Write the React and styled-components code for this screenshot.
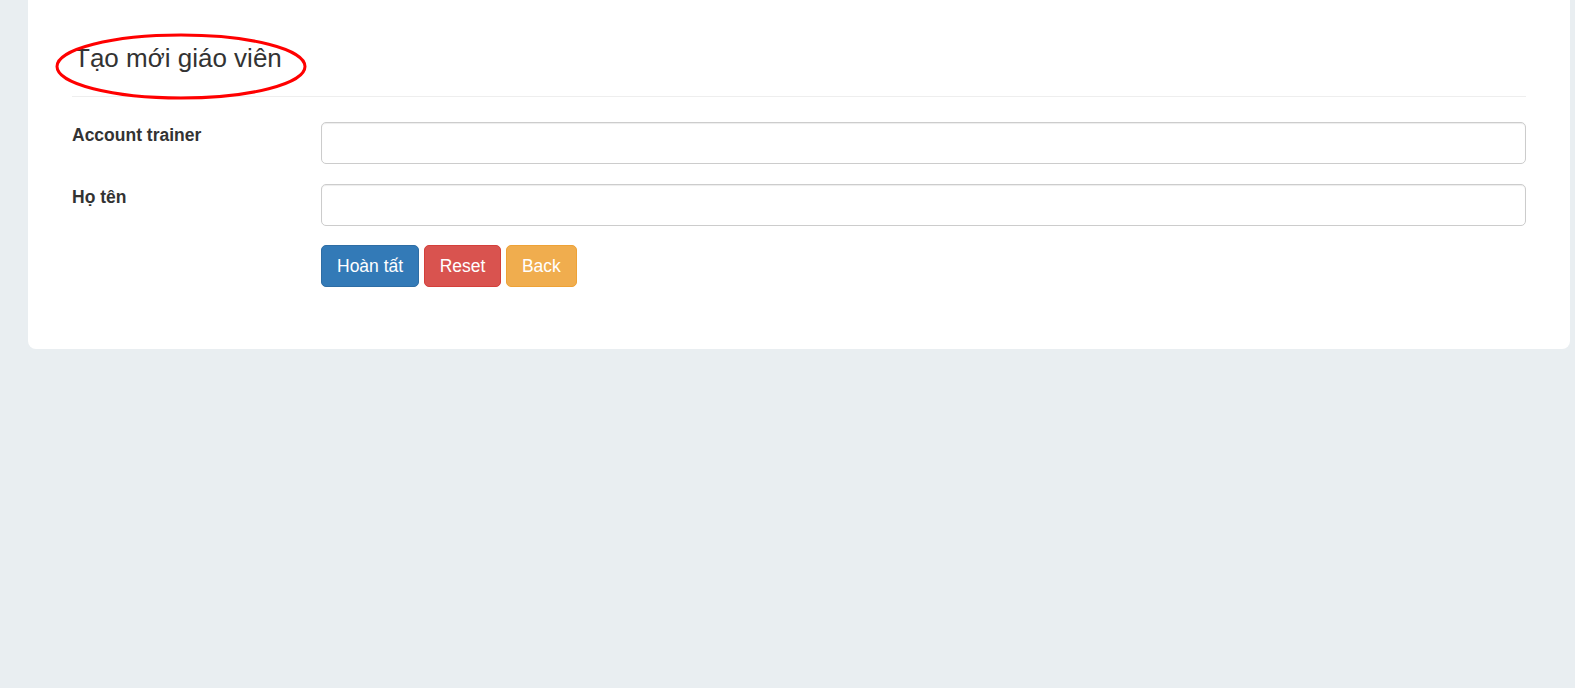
import styled, { createGlobalStyle } from "styled-components";

const GlobalStyle = createGlobalStyle`
  html, body {
    margin: 0;
    padding: 0;
    min-height: 100%;
    background-color: #e9eef1;
  }

  body {
    font-family: "Liberation Sans", Arial, sans-serif;
    color: #333;
  }

  * {
    box-sizing: border-box;
  }
`;

const Page = styled.div`
  min-height: 688px;
  padding: 0 5px 0 28px;
`;

const Card = styled.div`
  background-color: #fff;
  border-radius: 0 0 8px 8px;
  padding: 44px 44px 62px 44px;
`;

const Header = styled.div`
  position: relative;
  padding-bottom: 24px;
  border-bottom: 1px solid #eee;
`;

const Title = styled.h3`
  margin: 0;
  padding-left: 2px;
  font-size: 26px;
  font-weight: 400;
  line-height: 28px;
  color: #333;
`;

const Circle = styled.svg`
  position: absolute;
  left: -17px;
  top: -11px;
  pointer-events: none;
`;

const Form = styled.form`
  display: flex;
  flex-direction: column;
  gap: 20px;
  margin-top: 25px;
`;

const Row = styled.div`
  display: grid;
  grid-template-columns: 249px 1fr;
  align-items: start;
`;

const Label = styled.label`
  padding-top: 1px;
  font-size: 17.5px;
  font-weight: 700;
  line-height: 25px;
  color: #333;
`;

const Input = styled.input`
  display: block;
  width: 100%;
  height: 42px;
  padding: 8px 15px;
  font-family: inherit;
  font-size: 17.5px;
  color: #555;
  background-color: #fff;
  border: 1px solid #ccc;
  border-radius: 5px;
  box-shadow: inset 0 1px 1px rgba(0, 0, 0, 0.075);
  outline: none;
`;

const Actions = styled.div`
  display: flex;
  gap: 4.5px;
  margin-top: -1px;
`;

const palette = {
  primary: { bg: "#337ab7", border: "#2e6da4" },
  danger: { bg: "#d9534f", border: "#d43f3a" },
  warning: { bg: "#f0ad4e", border: "#eea236" },
};

const Button = styled.button`
  height: 42px;
  padding: 0 15px;
  font-family: inherit;
  font-size: 17.5px;
  line-height: 25px;
  color: #fff;
  background-color: ${({ $variant }) => palette[$variant].bg};
  border: 1px solid ${({ $variant }) => palette[$variant].border};
  border-radius: 5px;
  cursor: pointer;
`;

const App = () => {
  return (
    <>
      <GlobalStyle />
      <Page>
        <Card>
          <Header>
            <Title>Tạo mới giáo viên</Title>
            <Circle width="254" height="68" viewBox="0 0 254 68">
              <ellipse
                cx="126"
                cy="33.5"
                rx="124"
                ry="31.5"
                fill="none"
                stroke="#f00"
                strokeWidth="3"
              />
            </Circle>
          </Header>
          <Form onSubmit={(e) => e.preventDefault()}>
            <Row>
              <Label>Account trainer</Label>
              <Input type="text" />
            </Row>
            <Row>
              <Label>Họ tên</Label>
              <Input type="text" />
            </Row>
            <Row>
              <span />
              <Actions>
                <Button type="submit" $variant="primary">Hoàn tất</Button>
                <Button type="reset" $variant="danger">Reset</Button>
                <Button type="button" $variant="warning">Back</Button>
              </Actions>
            </Row>
          </Form>
        </Card>
      </Page>
    </>
  );
};

export default App;
